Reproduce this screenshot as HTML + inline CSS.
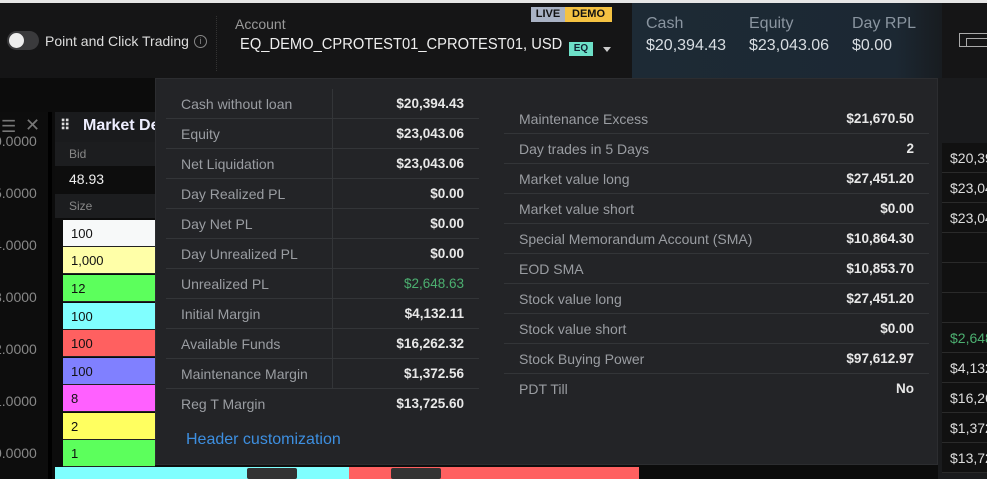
<!DOCTYPE html>
<html><head><meta charset="utf-8"><style>
*{box-sizing:border-box;margin:0;padding:0}
body{width:987px;height:479px;overflow:hidden;background:#0e0e0e;font-family:"Liberation Sans",sans-serif;position:relative;color:#ccc}
.a{position:absolute;white-space:nowrap}
.hdr{left:0;top:3px;width:987px;height:75px;background:#151516}
.stats{left:632px;top:3px;width:310px;height:75px;background:linear-gradient(90deg,#1d2a35,#1c2833 85%,#181c20)}
.pop{left:155px;top:78px;width:783px;height:387px;background:#232427;border:1px solid #2c2d30}
.row{position:absolute;height:30px;border-bottom:1px solid #333538;font-size:14px;line-height:30px}
.row .l{position:absolute;left:15px;color:#9a9da2}
.row .v{position:absolute;right:15px;color:#e8e8e8;font-weight:bold;font-size:13.5px}
.cell{position:absolute;left:63px;width:92px;height:27px;font-size:13px;color:#111;padding-left:8px;line-height:27px;border-bottom:1px solid #222}
.ax{position:absolute;left:-6px;font-size:14px;color:#888}
.rv{position:absolute;left:942px;width:45px;height:30px;border-bottom:1px solid #2a2a2a;font-size:14px;line-height:30px;color:#ddd;padding-left:8px;background:#111}
</style></head><body>
<div class="a" style="left:0;top:0;width:987px;height:3px;background:#e6e6e6"></div>
<div class="a hdr"></div>
<div class="a" style="left:7px;top:31px;width:32px;height:19px;border-radius:10px;background:#3a3a3c"></div>
<div class="a" style="left:9px;top:33px;width:15px;height:15px;border-radius:50%;background:#eee"></div>
<div class="a" style="left:45px;top:33px;font-size:14px;color:#ddd">Point and Click Trading</div>
<div class="a" style="left:194px;top:35px;width:13px;height:13px;border:1px solid #888;border-radius:50%;font-size:9px;color:#888;text-align:center;line-height:11px">i</div>
<div class="a" style="left:216px;top:16px;height:55px;border-left:1px dotted #333"></div>
<div class="a" style="left:235px;top:16px;font-size:14px;color:#999">Account</div>
<div class="a" style="left:240px;top:36px;font-size:16px;color:#eee;transform:scaleX(0.92);transform-origin:0 0">EQ_DEMO_CPROTEST01_CPROTEST01, USD</div>
<div class="a" style="left:569px;top:42px;width:24px;height:14px;background:#6de0c8;color:#123;font-size:10px;font-weight:bold;text-align:center;line-height:14px">EQ</div>
<div class="a" style="left:603px;top:47px;width:0;height:0;border-left:4px solid transparent;border-right:4px solid transparent;border-top:5px solid #ccc"></div>
<div class="a" style="left:531px;top:7px;width:34px;height:15px;background:#a9b2c4;color:#111;font-size:11px;font-weight:bold;text-align:center;line-height:15px">LIVE</div>
<div class="a" style="left:565px;top:7px;width:47px;height:15px;background:#f5c242;color:#111;font-size:11px;font-weight:bold;text-align:center;line-height:15px">DEMO</div>
<div class="a stats"></div>
<div class="a" style="left:646px;top:15px;font-size:16px;color:#8a95a0">Cash</div>
<div class="a" style="left:646px;top:37px;font-size:16px;color:#d8dde2">$20,394.43</div>
<div class="a" style="left:749px;top:15px;font-size:16px;color:#8a95a0">Equity</div>
<div class="a" style="left:749px;top:37px;font-size:16px;color:#d8dde2">$23,043.06</div>
<div class="a" style="left:852px;top:15px;font-size:16px;color:#8a95a0">Day RPL</div>
<div class="a" style="left:852px;top:37px;font-size:16px;color:#d8dde2">$0.00</div>
<div class="a" style="left:959px;top:33px;width:30px;height:14px;border:1px solid #aaa"></div>
<div class="a" style="left:966px;top:38px;width:24px;height:1px;background:#aaa"></div>
<div class="a" style="left:966px;top:38px;width:1px;height:9px;background:#aaa"></div>
<!-- left chart area -->
<div class="a" style="left:0;top:78px;width:155px;height:401px;background:#0c0c0c"></div>
<div class="a" style="left:0;top:112px;width:48px;height:367px;background:#0d0d0d"></div>
<div class="a" style="left:1px;top:117px;font-size:17px;color:#777">☰</div>
<div class="a" style="left:25px;top:115px;font-size:18px;color:#777">✕</div>
<div class="a" style="left:48px;top:112px;width:4px;height:367px;background:#000"></div>
<div class="a" style="left:55px;top:112px;width:100px;height:30px;background:#1a1b1d"></div>
<div class="a" style="left:60px;top:117px;font-size:14px;color:#ddd;font-weight:bold">⠿</div>
<div class="a" style="left:83px;top:117px;font-size:16px;color:#eef;font-weight:bold">Market De</div>
<div class="ax" style="top:133px">0.0000</div>
<div class="ax" style="top:185px">5.0000</div>
<div class="ax" style="top:237px">4.0000</div>
<div class="ax" style="top:289px">3.0000</div>
<div class="ax" style="top:341px">2.0000</div>
<div class="ax" style="top:393px">1.0000</div>
<div class="ax" style="top:445px">0.0000</div>
<div class="a" style="left:55px;top:142px;width:100px;height:24px;background:#1c1d1f"></div>
<div class="a" style="left:69px;top:147px;font-size:12px;color:#888">Bid</div>
<div class="a" style="left:55px;top:166px;width:100px;height:28px;background:#0d0d0d"></div>
<div class="a" style="left:69px;top:171px;font-size:14px;color:#eee">48.93</div>
<div class="a" style="left:55px;top:194px;width:100px;height:24px;background:#1c1d1f"></div>
<div class="a" style="left:69px;top:199px;font-size:12px;color:#888">Size</div>
<div class="cell" style="top:220px;background:#f7f9f9">100</div>
<div class="cell" style="top:247px;background:#ffffa8">1,000</div>
<div class="cell" style="top:275px;background:#5cff5c">12</div>
<div class="cell" style="top:303px;background:#80ffff">100</div>
<div class="cell" style="top:330px;background:#ff6060">100</div>
<div class="cell" style="top:358px;background:#8080ff">100</div>
<div class="cell" style="top:385px;background:#ff60ff">8</div>
<div class="cell" style="top:413px;background:#ffff60">2</div>
<div class="cell" style="top:440px;background:#5cff5c">1</div>
<div class="a" style="left:55px;top:467px;width:294px;height:12px;background:#80ffff"></div>
<div class="a" style="left:349px;top:467px;width:290px;height:12px;background:#ff6060"></div>
<div class="a" style="left:247px;top:468px;width:50px;height:11px;background:#333;border-radius:2px"></div>
<div class="a" style="left:391px;top:468px;width:50px;height:11px;background:#333;border-radius:2px"></div>
<div class="a" style="left:639px;top:465px;width:348px;height:14px;background:#0c0c0c"></div>
<!-- right side column -->
<div class="a" style="left:938px;top:78px;width:49px;height:401px;background:#1a1b1d"></div>
<div class="rv" style="top:143px">$20,394</div>
<div class="rv" style="top:173px">$23,043</div>
<div class="rv" style="top:203px">$23,043</div>
<div class="rv" style="top:233px"></div>
<div class="rv" style="top:263px"></div>
<div class="rv" style="top:293px"></div>
<div class="rv" style="top:323px;color:#4caf70">$2,648</div>
<div class="rv" style="top:353px">$4,132</div>
<div class="rv" style="top:383px">$16,262</div>
<div class="rv" style="top:413px">$1,372</div>
<div class="rv" style="top:443px">$13,725</div>
<!-- popup -->
<div class="a pop">
<div class="a" style="left:176px;top:10px;height:300px;border-left:1px solid #333538"></div>
<div class="row" style="left:10px;top:10px;width:313px"><span class="l">Cash without loan</span><span class="v">$20,394.43</span></div>
<div class="row" style="left:10px;top:40px;width:313px"><span class="l">Equity</span><span class="v">$23,043.06</span></div>
<div class="row" style="left:10px;top:70px;width:313px"><span class="l">Net Liquidation</span><span class="v">$23,043.06</span></div>
<div class="row" style="left:10px;top:100px;width:313px"><span class="l">Day Realized PL</span><span class="v">$0.00</span></div>
<div class="row" style="left:10px;top:130px;width:313px"><span class="l">Day Net PL</span><span class="v">$0.00</span></div>
<div class="row" style="left:10px;top:160px;width:313px"><span class="l">Day Unrealized PL</span><span class="v">$0.00</span></div>
<div class="row" style="left:10px;top:190px;width:313px"><span class="l">Unrealized PL</span><span class="v" style="color:#4caf70;font-weight:normal">$2,648.63</span></div>
<div class="row" style="left:10px;top:220px;width:313px"><span class="l">Initial Margin</span><span class="v">$4,132.11</span></div>
<div class="row" style="left:10px;top:250px;width:313px"><span class="l">Available Funds</span><span class="v">$16,262.32</span></div>
<div class="row" style="left:10px;top:280px;width:313px"><span class="l">Maintenance Margin</span><span class="v">$1,372.56</span></div>
<div class="row" style="left:10px;top:310px;width:313px;border:none"><span class="l">Reg T Margin</span><span class="v">$13,725.60</span></div>
<div class="a" style="left:30px;top:352px;font-size:16px;color:#3d8fe0">Header customization</div>
<div class="row" style="left:348px;top:25px;width:425px"><span class="l">Maintenance Excess</span><span class="v">$21,670.50</span></div>
<div class="row" style="left:348px;top:55px;width:425px"><span class="l">Day trades in 5 Days</span><span class="v">2</span></div>
<div class="row" style="left:348px;top:85px;width:425px"><span class="l">Market value long</span><span class="v">$27,451.20</span></div>
<div class="row" style="left:348px;top:115px;width:425px"><span class="l">Market value short</span><span class="v">$0.00</span></div>
<div class="row" style="left:348px;top:145px;width:425px"><span class="l">Special Memorandum Account (SMA)</span><span class="v">$10,864.30</span></div>
<div class="row" style="left:348px;top:175px;width:425px"><span class="l">EOD SMA</span><span class="v">$10,853.70</span></div>
<div class="row" style="left:348px;top:205px;width:425px"><span class="l">Stock value long</span><span class="v">$27,451.20</span></div>
<div class="row" style="left:348px;top:235px;width:425px"><span class="l">Stock value short</span><span class="v">$0.00</span></div>
<div class="row" style="left:348px;top:265px;width:425px"><span class="l">Stock Buying Power</span><span class="v">$97,612.97</span></div>
<div class="row" style="left:348px;top:295px;width:425px;border:none"><span class="l">PDT Till</span><span class="v">No</span></div>
</div>
</body></html>
